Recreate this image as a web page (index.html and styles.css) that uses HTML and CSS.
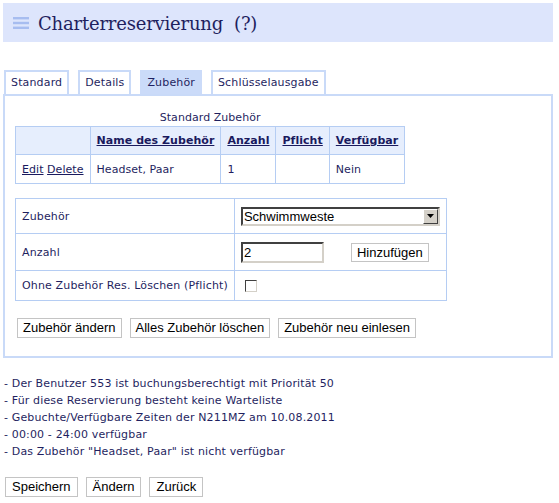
FILE: index.html
```html
<!DOCTYPE html>
<html>
<head>
<meta charset="utf-8">
<link rel="stylesheet" href="styles.css">
</head>
<body>
<div class="header">
  <svg class="burger" width="16" height="12" viewBox="0 0 16 12"><rect x="0" y="0" width="16" height="2.4" fill="#a7bdf0"/><rect x="0" y="4.8" width="16" height="2.4" fill="#a7bdf0"/><rect x="0" y="9.6" width="16" height="2.4" fill="#a7bdf0"/></svg>
  <h1 class="title">Charterreservierung&nbsp;&nbsp;(?)</h1>
</div>

<div class="tabs">
  <div class="tab">Standard</div>
  <div class="tab">Details</div>
  <div class="tab active">Zubehör</div>
  <div class="tab">Schlüsselausgabe</div>
</div>

<div class="panel">
  <table class="grid">
    <caption>Standard Zubehör</caption>
    <tr class="head">
      <th class="c1"></th>
      <th class="c2"><a>Name des Zubehör</a></th>
      <th class="c3"><a>Anzahl</a></th>
      <th class="c4"><a>Pflicht</a></th>
      <th class="c5"><a>Verfügbar</a></th>
    </tr>
    <tr class="row">
      <td><a>Edit</a> <a>Delete</a></td>
      <td>Headset, Paar</td>
      <td>1</td>
      <td></td>
      <td>Nein</td>
    </tr>
  </table>

  <table class="form">
    <tr class="r1">
      <td class="lbl">Zubehör</td>
      <td class="val">
        <span class="selectwrap">
          <select class="sel"><option>Schwimmweste</option></select>
          <span class="arrow"><svg width="7" height="4" viewBox="0 0 7 4"><polygon points="0,0 7,0 3.5,4" fill="#000"/></svg></span>
        </span>
      </td>
    </tr>
    <tr class="r2">
      <td class="lbl">Anzahl</td>
      <td class="val"><input class="num" type="text" value="2"><button class="btn add">Hinzufügen</button></td>
    </tr>
    <tr class="r3">
      <td class="lbl">Ohne Zubehör Res. Löschen (Pflicht)</td>
      <td class="val"><span class="chk"></span></td>
    </tr>
  </table>

  <div class="actions">
    <button class="btn">Zubehör ändern</button>
    <button class="btn">Alles Zubehör löschen</button>
    <button class="btn">Zubehör neu einlesen</button>
  </div>
</div>

<ul class="msgs">
  <li>- Der Benutzer 553 ist buchungsberechtigt mit Priorität 50</li>
  <li>- Für diese Reservierung besteht keine Warteliste</li>
  <li>- Gebuchte/Verfügbare Zeiten der N211MZ am 10.08.2011</li>
  <li>- 00:00 - 24:00 verfügbar</li>
  <li>- Das Zubehör "Headset, Paar" ist nicht verfügbar</li>
</ul>

<div class="bottom">
  <button class="btn">Speichern</button>
  <button class="btn">Ändern</button>
  <button class="btn">Zurück</button>
</div>
</body>
</html>
```

FILE: styles.css
```css
html, body {
  margin: 0;
  padding: 0;
  background: #fff;
}
body {
  padding: 3px;
  font-family: "DejaVu Sans", Verdana, sans-serif;
  font-size: 11px;
  letter-spacing: 0.15px;
  color: #1f1f5f;
}
.header {
  width: 550px;
  height: 39px;
  background: #dde5fc;
  display: flex;
  align-items: center;
  box-sizing: border-box;
  padding-left: 10px;
}
.burger {
  display: block;
  margin-top: 1px;
}
.title {
  margin: 1px 0 0 9px;
  font-family: "DejaVu Serif", Georgia, serif;
  font-weight: normal;
  font-size: 18px;
  color: #1f1f5f;
  letter-spacing: -0.2px;
}
.tabs {
  display: flex;
  margin: 28px 0 0 1px;
  gap: 9px;
}
.tab {
  height: 24px;
  box-sizing: border-box;
  border: 2px solid #c9daf8;
  border-bottom: 0;
  padding: 0 5px;
  line-height: 22px;
  color: #1f1f5f;
}
.tab.active {
  background: #cbdbf9;
  border-color: #cbdbf9;
}
.panel {
  width: 550px;
  box-sizing: border-box;
  border: 2px solid #c9daf8;
  padding: 0 10px 18px 10px;
}
.grid {
  border-collapse: collapse;
  margin-top: 13px;
  letter-spacing: 0.05px;
}
.grid caption {
  height: 17px;
  line-height: 17px;
  text-align: center;
}
.grid th, .grid td {
  border: 1px solid #b5cdf3;
  padding: 0 6px;
  text-align: left;
  white-space: nowrap;
}
.grid .head th {
  background: #e6eefd;
  height: 27px;
  font-weight: bold;
}
.grid .row td {
  height: 28px;
}
.grid a {
  text-decoration: underline;
  color: #1a1a5e;
}
.c1 { width: 60px; }
.form {
  border-collapse: collapse;
  margin-top: 14px;
  width: 431px;
}
.form td {
  border: 1px solid #b5cdf3;
  padding: 0 6px;
}
.form .lbl {
  width: 207px;
  white-space: nowrap;
}
.form .r1 td { height: 34px; }
.form .r2 td { height: 36px; }
.form .r3 td { height: 29px; }
.selectwrap {
  position: relative;
  display: inline-block;
  width: 199px;
  height: 19px;
  vertical-align: middle;
}
.sel {
  appearance: none;
  -webkit-appearance: none;
  width: 199px;
  height: 19px;
  box-sizing: border-box;
  border: 2px solid;
  border-color: #404040 #d4d0c8 #d4d0c8 #404040;
  background: #fff;
  font-family: "Liberation Sans", Arial, sans-serif;
  font-size: 13px;
  letter-spacing: 0;
  color: #000;
  padding: 0 0 0 1px;
  margin: 0;
  outline: none;
}
.arrow {
  position: absolute;
  right: 2px;
  top: 2px;
  width: 15px;
  height: 15px;
  box-sizing: border-box;
  background: #d4d0c8;
  border: 1px solid;
  border-color: #fff #404040 #404040 #fff;
  display: flex;
  align-items: center;
  justify-content: center;
}
.num {
  width: 83px;
  height: 21px;
  box-sizing: border-box;
  border: 2px solid;
  border-color: #404040 #d4d0c8 #d4d0c8 #404040;
  font-family: "Liberation Sans", Arial, sans-serif;
  font-size: 13px;
  letter-spacing: 0;
  color: #000;
  padding: 0 1px;
  margin: 0;
  vertical-align: middle;
}
.btn {
  font-family: "Liberation Sans", Arial, sans-serif;
  font-size: 13px;
  letter-spacing: 0;
  color: #000;
  background: #fff;
  border: 1px solid #c4c4c4;
  height: 20px;
  padding: 0 5px;
  margin: 0;
  line-height: 18px;
  vertical-align: middle;
}
.add {
  margin-left: 27px;
  height: 19px;
}
.chk {
  display: inline-block;
  width: 12px;
  height: 12px;
  box-sizing: border-box;
  border: 1px solid;
  border-color: #404040 #d4d0c8 #d4d0c8 #404040;
  margin-left: 4px;
  vertical-align: middle;
  background: #fff;
}
.actions {
  display: flex;
  gap: 8px;
  margin: 17px 0 0 2px;
}
.msgs {
  list-style: none;
  margin: 17px 0 0 1px;
  padding: 0;
}
.msgs li {
  height: 17px;
  line-height: 17px;
}
.bottom {
  display: flex;
  gap: 8px;
  margin: 17px 0 0 2px;
}
.bottom .btn {
  padding: 0 6px;
}
```
